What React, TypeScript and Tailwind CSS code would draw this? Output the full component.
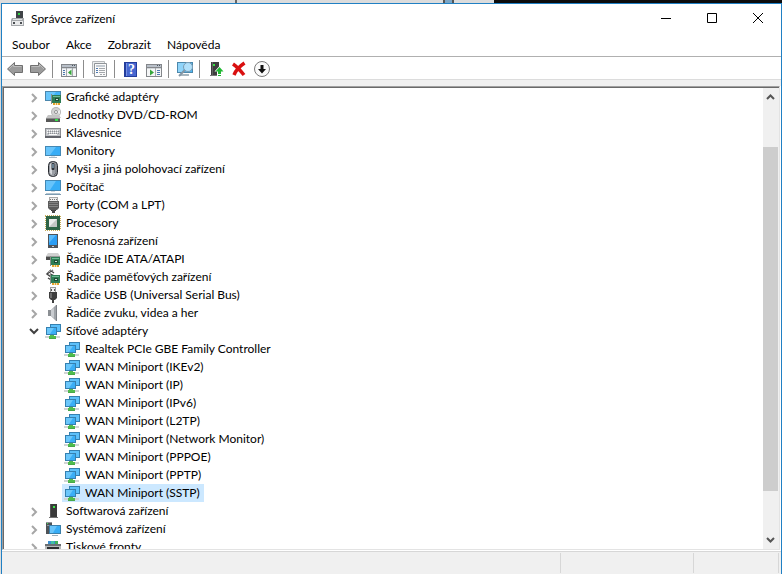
import { useState, type ReactNode } from "react";

type Kind =
  | "gpu" | "disc" | "keyboard" | "monitor" | "mouse" | "computer" | "port" | "cpu" | "portable"
  | "ide" | "memory" | "usb" | "sound" | "network" | "software" | "system" | "printer";

interface Item {
  label: string;
  icon: Kind;
  children?: string[];
}

const devices: Item[] = [
  { label: "Grafické adaptéry", icon: "gpu" },
  { label: "Jednotky DVD/CD-ROM", icon: "disc" },
  { label: "Klávesnice", icon: "keyboard" },
  { label: "Monitory", icon: "monitor" },
  { label: "Myši a jiná polohovací zařízení", icon: "mouse" },
  { label: "Počítač", icon: "computer" },
  { label: "Porty (COM a LPT)", icon: "port" },
  { label: "Procesory", icon: "cpu" },
  { label: "Přenosná zařízení", icon: "portable" },
  { label: "Řadiče IDE ATA/ATAPI", icon: "ide" },
  { label: "Řadiče paměťových zařízení", icon: "memory" },
  { label: "Řadiče USB (Universal Serial Bus)", icon: "usb" },
  { label: "Řadiče zvuku, videa a her", icon: "sound" },
  {
    label: "Síťové adaptéry",
    icon: "network",
    children: [
      "Realtek PCIe GBE Family Controller",
      "WAN Miniport (IKEv2)",
      "WAN Miniport (IP)",
      "WAN Miniport (IPv6)",
      "WAN Miniport (L2TP)",
      "WAN Miniport (Network Monitor)",
      "WAN Miniport (PPPOE)",
      "WAN Miniport (PPTP)",
      "WAN Miniport (SSTP)",
    ],
  },
  { label: "Softwarová zařízení", icon: "software" },
  { label: "Systémová zařízení", icon: "system" },
  { label: "Tiskové fronty", icon: "printer" },
];

const board = (
  <>
    <path d="M7 6h9v8H7z" fill="#2f7d55" />
    <path d="M8 7h7v1H8z" fill="#6fba96" />
    <path d="M10 9h4v3h-4z" fill="#1d4d35" />
    <path d="M11 10h2v1h-2z" fill="#c9e4d6" />
    <path d="M6 5h1v10H6z" fill="#8a8f8c" />
    <path d="M8 14h7v2H8z" fill="#e3a32b" />
    <path d="M10 14h1v2h-1zM12 14h1v2h-1z" fill="#f4dfae" />
  </>
);

const shapes: Record<Kind, ReactNode> = {
  gpu: (
    <>
      <path d="M0 2h16v10H0z" fill="#4b87ad" />
      <path d="M1 3h14v8H1z" fill="#3fb2f8" />
      <path d="M1 3h10L5 11H1z" fill="#69c6fb" />
      {board}
    </>
  ),
  disc: (
    <>
      <circle cx="11" cy="5" r="5" fill="#b5b5b5" />
      <circle cx="11" cy="5" r="4" fill="#d2d2d2" />
      <path d="M11 5l4-2v4z" fill="#ededed" />
      <circle cx="11" cy="5" r="1.5" fill="#fff" stroke="#8f8f8f" />
      <path d="M3 8h11l2 3H1z" fill="#c4c4c4" />
      <path d="M1 11h14v4H1z" fill="#575757" />
      <path d="M1 11h14v1H1z" fill="#8b8b8b" />
      <path d="M10 12h3v2h-3z" fill="#35e04a" />
    </>
  ),
  keyboard: (
    <>
      <path d="M0 3h16v10H0z" fill="#8a8c90" />
      <path d="M1 4h14v7H1z" fill="#c3c6ca" />
      <path d="M2 5.5h12M2 7.5h12" stroke="#f8f8f8" strokeDasharray="1 1" />
      <path d="M3 6.5h11M3 8.5h11" stroke="#8d9096" strokeDasharray="1 1" />
      <path d="M4 9h8v1H4z" fill="#fafafa" />
      <path d="M0 11h16v2H0z" fill="#62646b" />
    </>
  ),
  monitor: (
    <>
      <path d="M0 3h16v10H0z" fill="#4388b4" />
      <path d="M1 4h14v8H1z" fill="#37adf6" />
      <path d="M1 4h10L5 12H1z" fill="#67c4fb" />
      <path d="M6 13h4v1H6z" fill="#dfe7ec" />
      <path d="M4 14h8v1H4z" fill="#a9bac5" />
    </>
  ),
  mouse: (
    <>
      <rect x="3.500" y=".5" width="9" height="15" rx="4" fill="#9b9fa5" stroke="#26292e" />
      <path d="M5 3v9l2 2V2z" fill="#d5d8dc" />
      <rect x="6.500" y="2" width="3" height="7" rx="1" fill="#2f3339" />
      <path d="M8 3v4" stroke="#9ecbe8" />
      <path d="M11 3v9l-2 2" fill="none" stroke="#6a6e75" />
    </>
  ),
  computer: (
    <>
      <path d="M0 1h16v11H0z" fill="#4388b4" />
      <path d="M1 2h14v9H1z" fill="#37adf6" />
      <path d="M1 2h10L5 11H1z" fill="#67c4fb" />
      <path d="M6 12h4v1H6z" fill="#cfd9df" />
      <path d="M1 14h14v1H1z" fill="#b4c6d2" />
      <path d="M0 15h16v1H0z" fill="#7d9bb0" />
    </>
  ),
  port: (
    <>
      <path d="M4 0h9v4H4z" fill="#a8a8a8" />
      <path d="M5 1h7v3H5z" fill="#ededed" />
      <path d="M5 2.500h7" stroke="#777" strokeDasharray="1 1" />
      <path d="M3 4h11v7l-2 2H5l-2-2z" fill="#5c5c5c" />
      <path d="M4 5h9v1H4zM4 7h9v1H4zM4 9h9v1H4z" fill="#858585" />
      <path d="M6 13h5v1H6z" fill="#3c3c3c" />
      <path d="M7 13h3v3H7z" fill="#474747" />
    </>
  ),
  cpu: (
    <>
      <path d="M0 .5h16M0 15.500h16M.5 1v14M15.500 1v14" stroke="#c5ab57" strokeDasharray="1 1" />
      <path d="M1 1h14v14H1z" fill="#2e6446" />
      <path d="M4 4h8v8H4z" fill="#c4c6c5" />
      <path d="M4 4h8l-8 8z" fill="#ebecec" />
    </>
  ),
  portable: (
    <>
      <path d="M3 1h10v14H3z" fill="#4e5359" />
      <path d="M4 2h8v10H4z" fill="#2a9df4" />
      <path d="M4 2h7l-7 8z" fill="#59bafa" />
      <path d="M7 13h2v1H7z" fill="#c7cdd3" />
    </>
  ),
  ide: (
    <>
      <path d="M3 2h10l2 3H1z" fill="#d0d0d0" />
      <path d="M1 5h14v4H1z" fill="#4c4c4c" />
      <path d="M1 5h14v1H1z" fill="#9a9a9a" />
      <g transform="translate(-1 0)">{board}</g>
    </>
  ),
  memory: (
    <>
      <path d="M8 1L2 5l4 3M5 1l4 3M3 9l5 3M5 5l4 2" fill="none" stroke="#424242" strokeWidth="1.400" />
      <path d="M1 5l4-4 3 1" fill="none" stroke="#909090" />
      <g transform="translate(-1 0)">{board}</g>
    </>
  ),
  usb: (
    <>
      <path d="M5 0h6v5H5z" fill="#9c9c9c" />
      <path d="M6 1h4v4H6z" fill="#f2f2f2" />
      <path d="M6 2h1v2H6zM9 2h1v2H9z" fill="#555" />
      <path d="M4 5h8v6l-2 2H6l-2-2z" fill="#3e3e3e" />
      <path d="M5 6h2v5H5z" fill="#6c6c6c" />
      <path d="M7 13h2v3H7z" fill="#404040" />
    </>
  ),
  sound: (
    <>
      <path d="M3 5h3v6H3z" fill="#8b8f93" />
      <path d="M6 5l5-5v16l-5-5z" fill="#a0a4a9" />
      <path d="M6 5l3-2v10l-3-2z" fill="#c9ccd0" />
      <path d="M11 0h1v16h-1z" fill="#7c8086" />
    </>
  ),
  network: (
    <>
      <path d="M5 1h11v8H5z" fill="#3580b0" />
      <path d="M6 2h9v6H6z" fill="#5cc0fa" />
      <path d="M1 4h11v8H1z" fill="#3580b0" />
      <path d="M2 5h9v6H2z" fill="#3aaef6" />
      <path d="M2 5h7l-4 6H2z" fill="#6bc7fb" />
      <path d="M0 13h15v2H0z" fill="#d0d4d5" />
      <path d="M5 12h4v1H5z" fill="#55b856" />
      <path d="M4 13h7v2H4z" fill="#4fbd4c" />
      <path d="M4 15h7v1H4z" fill="#48a84a" />
    </>
  ),
  software: (
    <>
      <path d="M5 1h7v13H5z" fill="#3a3a3a" />
      <path d="M5 1h1v13H5z" fill="#565656" />
      <path d="M8 3h2v2H8z" fill="#3bea46" />
      <path d="M4 14h9v1H4z" fill="#737373" />
    </>
  ),
  system: (
    <>
      <path d="M1 1h6v12H1z" fill="#505458" />
      <path d="M1 1h6v1H1zM2 4h4v1H2z" fill="#92979b" />
      <path d="M2 2h1v1H2z" fill="#43e252" />
      <path d="M4 4h12v9H4z" fill="#3c7fa9" />
      <path d="M5 5h10v7H5z" fill="#37adf6" />
      <path d="M5 5h7l-4 7H5z" fill="#69c5fb" />
      <path d="M7 14h6v1H7z" fill="#9db0bc" />
    </>
  ),
  printer: (
    <>
      <path d="M3 2h10v4H3z" fill="#3c8fd0" />
      <path d="M6 2h3v3H6z" fill="#42c2a4" />
      <path d="M10 2h3v3h-3z" fill="#3fb258" />
      <path d="M0 5h16v2H0z" fill="#6b6f73" />
      <path d="M0 7h16v6H0z" fill="#b8babb" />
      <path d="M2 8h12v2H2z" fill="#2d2f31" />
      <path d="M4 10h8v5H4z" fill="#f7f7f7" />
    </>
  ),
};

function Icon({ children, w = 16 }: { children: ReactNode; w?: number }) {
  return (
    <svg className="shrink-0" width={w} height="16" viewBox={`0 0 ${w} 16`} aria-hidden="true">
      {children}
    </svg>
  );
}

const panelFrame = (
  <>
    <path d="M0 3h16v13H0z" fill="#84878b" />
    <path d="M1 4h14v2H1z" fill="#b9c0c9" />
    <path d="M11 4h1v1h-1zM13 4h1v1h-1z" fill="#4c5660" />
    <path d="M1 7h14v8H1z" fill="#f5f6f7" />
    <path d="M1 7h14v1H1z" fill="#d2d6da" />
  </>
);

const tools: (null | { name: string; art: ReactNode; w?: number })[] = [
  {
    name: "Zpět",
    art: (
      <>
        <path d="M.5 8l7-6.500V4.500h8v7h-8v3z" fill="#9b9b9b" stroke="#707070" />
        <path d="M2 8l4.500-4.500v2h8" fill="none" stroke="#bdbdbd" />
      </>
    ),
  },
  {
    name: "Vpřed",
    art: (
      <>
        <path d="M15.500 8l-7-6.500V4.500h-8v7h8v3z" fill="#9b9b9b" stroke="#707070" />
        <path d="M14 8L9.500 3.500v2h-8" fill="none" stroke="#bdbdbd" />
      </>
    ),
  },
  null,
  {
    name: "Zobrazit strom konzoly",
    art: (
      <>
        {panelFrame}
        <path d="M5 7h1v8H5zM11 7h1v8h-1z" fill="#a5a9ae" />
        <path d="M2 9h2v1H2zM2 11h2v1H2zM2 13h2v1H2z" fill="#4d79b0" />
        <path d="M10.500 8.500v6L7 11.500z" fill="#36a63b" />
      </>
    ),
  },
  null,
  {
    name: "Vlastnosti",
    art: (
      <>
        <path d="M.5.5h12v12H.5z" fill="#eceeef" stroke="#b5b8bb" />
        <path d="M2.500 2.500h12v13h-12z" fill="#fafafa" stroke="#909498" />
        <path d="M4 4h9v2H4z" fill="#c4cbd2" />
        <path d="M4 7h2v1H4zM4 9h2v1H4zM4 11h2v1H4z" fill="#4d79b0" />
        <path d="M7 7h6v1H7zM7 9h6v1H7zM7 11h6v1H7zM8 13h2v1H8zM11 13h2v1h-2z" fill="#a4a8ac" />
      </>
    ),
  },
  null,
  {
    name: "Nápověda",
    art: (
      <>
        <path d="M1 1h13v15H1z" fill="#233d9c" />
        <path d="M3 2h10v13H3z" fill="#4767d0" />
        <path d="M3 2h1v13H3z" fill="#7590e4" />
        <text x="8.500" y="13" textAnchor="middle" fontSize="14" fontWeight="700" fontFamily="Liberation Serif, serif" fill="#fff">?</text>
      </>
    ),
  },
  {
    name: "Zobrazit podokno akcí",
    art: (
      <>
        {panelFrame}
        <path d="M9 7h1v8H9z" fill="#a5a9ae" />
        <path d="M11 9h3v1h-3zM11 11h3v1h-3zM11 13h3v1h-3z" fill="#4d79b0" />
        <path d="M4 8.500v6l4-3z" fill="#36a63b" />
      </>
    ),
  },
  null,
  {
    name: "Vyhledat změny hardwaru",
    w: 18,
    art: (
      <>
        <path d="M0 1h16v11H0z" fill="#4c88ac" />
        <path d="M1 2h14v9H1z" fill="#4db8f5" />
        <path d="M1 2h9l-5 9H1z" fill="#8fd4fa" />
        <path d="M3 13h9v2H3z" fill="#a8b6bf" />
        <path d="M8 9l-6 6" stroke="#8496a4" strokeWidth="2" />
        <circle cx="11" cy="6" r="4.500" fill="#b0e0fb" stroke="#7d9cb2" />
      </>
    ),
  },
  null,
  {
    name: "Aktualizovat ovladač",
    art: (
      <>
        <path d="M3 1h8v13H3z" fill="#3e3e3e" />
        <path d="M4 1h1v13H4z" fill="#606060" />
        <path d="M5 3h2v2H5z" fill="#38df43" />
        <path d="M2 14h8v1H2z" fill="#777" />
        <path d="M11.500 5l5 5.500H14V16H9v-5.500H6.500z" fill="#fff" />
        <path d="M11.500 6l4 4.500H13V13h-3v-2.500H7.500zM10 14h3v1h-3z" fill="#20b832" />
      </>
    ),
  },
  {
    name: "Odinstalovat zařízení",
    art: <path d="M2 3c3 2 7 6 11 11M13.500 2C9 5 5 9 3 14" fill="none" stroke="#d91010" strokeWidth="3.500" />,
  },
  {
    name: "Zakázat zařízení",
    art: (
      <>
        <circle cx="8" cy="8" r="7.500" fill="#fafafa" stroke="#7b7b7b" />
        <path d="M6.500 4h3v4H12l-4 4.500L4 8h2.500z" fill="#111" />
      </>
    ),
  },
];

function Row({ icon, label, selected, onSelect }: { icon: Kind; label: string; selected: boolean; onSelect: () => void }) {
  return (
    <button
      type="button"
      onClick={onSelect}
      className="flex h-[18px] items-center whitespace-nowrap text-left"
    >
      <span className={`flex h-[18px] items-center gap-[5px] px-0.5 ${selected ? "bg-[#cce8ff]" : ""}`}>
        <Icon>{shapes[icon]}</Icon>
        <span className="pr-0.5">{label}</span>
      </span>
    </button>
  );
}

function TreeBranch({ item, selected, onSelect }: { item: Item; selected: string; onSelect: (s: string) => void }) {
  const [open, setOpen] = useState(Boolean(item.children));
  return (
    <li>
      <div className="flex items-center">
        <button
          type="button"
          aria-label={`Rozbalit ${item.label}`}
          aria-expanded={open}
          onClick={() => setOpen(!open)}
          className="flex h-[18px] w-[15px] items-center justify-start"
        >
          <svg width="12" height="16" viewBox="0 0 12 16" fill="none" strokeWidth="2" aria-hidden="true">
            {open ? <path d="M2 6l4 4 4-4" stroke="#404040" /> : <path d="M4 5l4 4-4 4" stroke="#a6a6a6" />}
          </svg>
        </button>
        <Row icon={item.icon} label={item.label} selected={selected === item.label} onSelect={() => onSelect(item.label)} />
      </div>
      {open && item.children && (
        <ul className="pl-[34px]">
          {item.children.map((c) => (
            <li key={c}>
              <Row icon="network" label={c} selected={selected === c} onSelect={() => onSelect(c)} />
            </li>
          ))}
        </ul>
      )}
    </li>
  );
}

export default function App() {
  const [selected, setSelected] = useState("WAN Miniport (SSTP)");
  return (
    <div className="flex h-screen flex-col overflow-hidden bg-[#dcdcdc] pl-px font-['Lato',sans-serif] text-[12px] leading-[18px] text-black">
      <div className="flex h-[3px] shrink-0 bg-[#dcdcdc]">
        <div className="flex w-[493px] justify-between pl-[234px] pr-10">
          <i className="w-0.5 bg-[#666]" />
          <i className="w-[11px] border-x-2 border-[#555] bg-[#7ba6c6]" />
        </div>
        <div className="flex-1 bg-[#0c0c0c]" />
      </div>
      <div className="flex min-h-0 flex-1 flex-col border-x border-t border-[#2080c4] bg-white">
        <header className="flex h-[30px] shrink-0 items-center pl-[9px]">
          <Icon>
            <path d="M5 0h7v8H5z" fill="#3f4347" />
            <path d="M7 2h2v2H7z" fill="#35d447" />
            <path d="M1 7h12v8H0V9z" fill="#a5a8ab" />
            <path d="M2 8h9v1H2z" fill="#e1e3e4" />
            <path d="M1 10h11v4H1z" fill="#e9eaeb" />
            <path d="M2 11h2v2H2zM9 11h2v2H9z" fill="#4a4e52" />
          </Icon>
          <h1 className="flex-1 pl-1">Správce zařízení</h1>
          <button type="button" aria-label="Minimalizovat" className="flex h-full w-[46px] items-center justify-center pb-0.5">
            <svg width="10" height="10" aria-hidden="true"><path d="M0 5.500h10" stroke="#000" /></svg>
          </button>
          <button type="button" aria-label="Maximalizovat" className="flex h-full w-[46px] items-center justify-center pb-0.5">
            <svg width="10" height="10" aria-hidden="true"><path d="M.5.5h9v9h-9z" fill="none" stroke="#000" /></svg>
          </button>
          <button type="button" aria-label="Zavřít" className="flex h-full w-[46px] items-center justify-center pb-0.5">
            <svg width="10" height="10" aria-hidden="true"><path d="M0 0l10 10M10 0L0 10" stroke="#000" /></svg>
          </button>
        </header>
        <nav className="flex h-[23px] shrink-0 items-center border-b border-[#b0b0b0] pl-0.5">
          {["Soubor", "Akce", "Zobrazit", "Nápověda"].map((m) => (
            <button key={m} type="button" className="px-2">{m}</button>
          ))}
        </nav>
        <div role="toolbar" className="flex h-[23px] shrink-0 items-center border-b border-[#dcdcdc] pl-0.5 pt-0.5">
          {tools.map((t, i) =>
            t ? (
              <button key={t.name} type="button" aria-label={t.name} className="flex h-full w-[23px] items-center pl-[3px]">
                <Icon w={t.w}>{t.art}</Icon>
              </button>
            ) : (
              <span key={i} className="ml-0.5 mr-[5px] h-[18px] w-px bg-[#8c8c8c]" />
            ),
          )}
        </div>
        <div className="h-1.5 shrink-0 bg-[#f0f0f0]" />
        <main className="mr-px flex min-h-0 flex-1 border border-b-[#e3e3e3] border-l-[#a0a0a0] border-r-[#e3e3e3] border-t-[#a0a0a0]">
          <div className="flex min-w-0 flex-1 border-l border-t border-[#696969]">
            <ul className="min-w-0 flex-1 overflow-hidden pl-6">
              {devices.map((d) => (
                <TreeBranch key={d.label} item={d} selected={selected} onSelect={setSelected} />
              ))}
            </ul>
            <div className="flex w-4 flex-col bg-[#f0f0f0] pr-px">
              <button type="button" aria-label="Posunout nahoru" className="flex h-[17px] shrink-0 items-center justify-center">
                <svg width="9" height="7" aria-hidden="true"><path d="M1 6l3.500-3.500L8 6" fill="none" stroke="#555" strokeWidth="2" /></svg>
              </button>
              <div className="flex flex-1 flex-col">
                <div className="grow-[42]" />
                <div className="grow-[344] bg-[#cdcdcd]" />
                <div className="grow-[41]" />
              </div>
              <button type="button" aria-label="Posunout dolů" className="flex h-[17px] shrink-0 items-center justify-center">
                <svg width="9" height="7" aria-hidden="true"><path d="M1 1l3.500 3.500L8 1" fill="none" stroke="#555" strokeWidth="2" /></svg>
              </button>
            </div>
          </div>
        </main>
        <footer className="mt-px flex h-[23px] shrink-0 border-t border-[#d7d7d7] bg-[#f0f0f0] py-px pr-0.5">
          <div className="flex-1 border-r border-[#d7d7d7]" />
          <div className="w-[133px] border-r border-[#d7d7d7]" />
          <div className="w-[85px] border-r border-[#d7d7d7]" />
        </footer>
      </div>
    </div>
  );
}
